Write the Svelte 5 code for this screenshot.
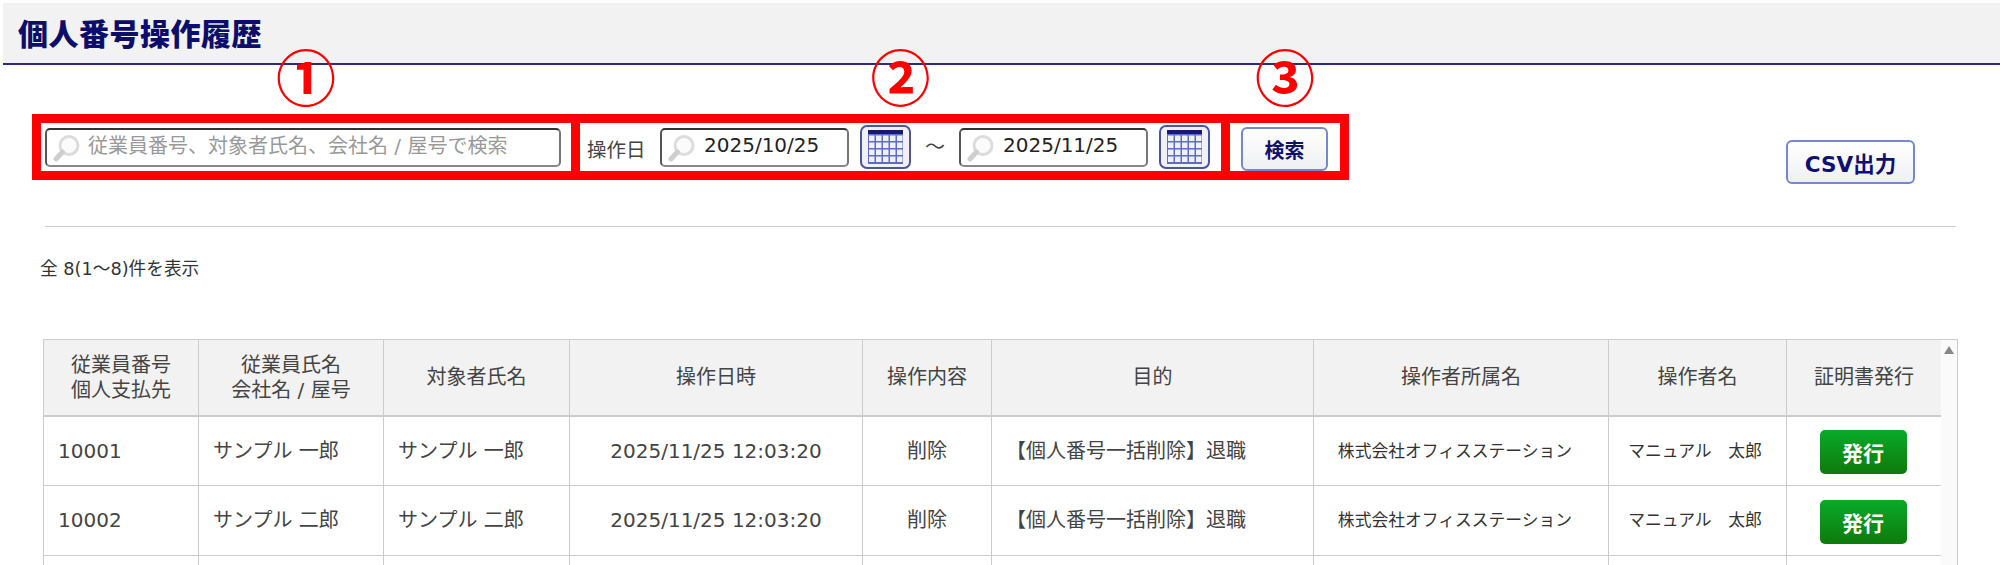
<script>
  const rows = [
    { id: '10001', employee: 'サンプル 一郎', target: 'サンプル 一郎' },
    { id: '10002', employee: 'サンプル 二郎', target: 'サンプル 二郎' }
  ];
  const columns = [0, 1, 2, 3, 4];
  const gridRows = [0, 1, 2, 3];
</script>

{#snippet searchIcon()}
  <svg class="lens" width="28" height="28" viewBox="0 0 28 28" aria-hidden="true">
    <circle cx="16" cy="11.5" r="9" fill="#fbfbfb" stroke="#dcdcdc" stroke-width="3" />
    <path d="M9.5 18 L3 25" stroke="#cfcfcf" stroke-width="5" stroke-linecap="round" />
  </svg>
{/snippet}

{#snippet calendar()}
  <button class="cal" aria-label="カレンダー">
    <svg width="35" height="34" viewBox="0 0 35 34" aria-hidden="true">
      <rect width="35" height="34" fill="#5f6cc4" />
      <rect width="35" height="4" fill="#191970" />
      {#each gridRows as r}
        {#each columns as c}
          <rect x={1 + c * 7} y={5.5 + r * 7} width="5.5" height="5.5" fill="#eef0fb" />
        {/each}
      {/each}
    </svg>
  </button>
{/snippet}

<div class="page">
  <header class="title-bar">
    <h1>個人番号操作履歴</h1>
  </header>

  <div class="controls">
    <div class="red-frame">
      <section class="sec sec-1">
        <span class="mark">①</span>
        <div class="field wide">
          {@render searchIcon()}
          <input placeholder="従業員番号、対象者氏名、会社名 / 屋号で検索" />
        </div>
      </section>
      <section class="sec sec-2">
        <span class="mark">②</span>
        <span class="label">操作日</span>
        <div class="field date">
          {@render searchIcon()}
          <input value="2025/10/25" />
        </div>
        {@render calendar()}
        <span class="tilde">～</span>
        <div class="field date">
          {@render searchIcon()}
          <input value="2025/11/25" />
        </div>
        {@render calendar()}
      </section>
      <section class="sec sec-3">
        <span class="mark">③</span>
        <button class="btn search">検索</button>
      </section>
    </div>
    <button class="btn csv">CSV出力</button>
  </div>

  <hr />

  <p class="count">全 8(1～8)件を表示</p>

  <div class="table-wrap">
    <table>
      <colgroup>
        <col /><col /><col /><col /><col /><col /><col /><col /><col />
      </colgroup>
      <thead>
        <tr>
          <th>従業員番号<br />個人支払先</th>
          <th>従業員氏名<br />会社名 / 屋号</th>
          <th>対象者氏名</th>
          <th>操作日時</th>
          <th>操作内容</th>
          <th>目的</th>
          <th>操作者所属名</th>
          <th>操作者名</th>
          <th>証明書発行</th>
        </tr>
      </thead>
      <tbody>
        {#each rows as row}
          <tr>
            <td class="left">{row.id}</td>
            <td class="left">{row.employee}</td>
            <td class="left">{row.target}</td>
            <td>2025/11/25 12:03:20</td>
            <td>削除</td>
            <td class="left">【個人番号一括削除】退職</td>
            <td class="small org">株式会社オフィスステーション</td>
            <td class="small op">マニュアル　太郎</td>
            <td><button class="issue">発行</button></td>
          </tr>
        {/each}
        <tr class="blank">
          <td></td><td></td><td></td><td></td><td></td><td></td><td></td><td></td><td></td>
        </tr>
      </tbody>
    </table>
    <div class="scroll-track"><span class="arrow"></span></div>
  </div>
</div>

<style>
  :global(body) {
    margin: 0;
    background: #fff;
  }
  .page {
    height: 565px;
    overflow: hidden;
    font-family: "DejaVu Sans", "Noto Sans CJK JP", sans-serif;
    font-size: 20px;
    color: #444;
  }
  .title-bar {
    margin: 3px 0 0 3px;
    height: 60px;
    background: #f2f2f2;
    border-bottom: 2px solid #2b2b85;
    display: flex;
    align-items: center;
    padding-left: 15px;
  }
  h1 {
    margin: 0 0 3px;
    font-size: 30px;
    letter-spacing: 0.5px;
    font-weight: 900;
    color: #0d0d6b;
    font-family: "Noto Sans CJK JP", sans-serif;
  }
  .controls {
    display: flex;
    align-items: flex-start;
    justify-content: space-between;
    margin: 49px 85px 0 32px;
  }
  .red-frame {
    display: flex;
    height: 48px;
    border: 9px solid #f00;
    background: #f00;
    gap: 9px;
  }
  .sec {
    position: relative;
    background: #fff;
    display: flex;
    align-items: center;
    height: 48px;
    box-sizing: border-box;
  }
  .sec-1 { width: 530px; padding-left: 5px; }
  .sec-2 { width: 641px; padding-left: 7px; }
  .sec-3 { width: 110px; padding-left: 11px; }
  .mark {
    position: absolute;
    left: 50%;
    top: -78px;
    transform: translateX(-50%);
    font-family: "Noto Sans CJK JP", sans-serif;
    font-size: 60px;
    line-height: 60px;
    font-weight: 700;
    color: #f00;
  }
  .field {
    position: relative;
    box-sizing: border-box;
    height: 39px;
    border: 2px solid;
    border-color: #333 #777 #888 #555;
    border-radius: 5px;
    background: #fff;
    display: flex;
    align-items: center;
  }
  .wide { width: 516px; margin-top: 1px; margin-left: -1px; }
  .date { width: 189px; margin-top: 1px; }
  .lens {
    flex: none;
    margin-left: 6px;
  }
  input {
    flex: 1;
    min-width: 0;
    border: 0;
    outline: 0;
    padding: 0;
    background: transparent;
    font: inherit;
    color: #222;
  }
  .wide input { margin-left: 7px; margin-top: -4px; }
  .date input { margin-left: 8px; margin-top: -5px; }
  input::placeholder {
    color: #999;
    opacity: 1;
    font-family: "DejaVu Sans", "Noto Sans CJK JP", sans-serif;
  }
  .label {
    width: 73px;
    flex: none;
    font-size: 19.5px;
    margin-top: 2px;
  }
  .cal {
    flex: none;
    box-sizing: border-box;
    width: 51px;
    height: 44px;
    margin-left: 11px;
    padding: 0;
    border: 2px solid #4a55a0;
    border-radius: 7px;
    background: #f0f0f6;
    display: flex;
    align-items: center;
    justify-content: center;
  }
  .tilde {
    width: 48px;
    flex: none;
    text-align: center;
    margin-top: -4px;
  }
  .btn {
    box-sizing: border-box;
    border: 2px solid #7587cf;
    border-radius: 6px;
    background: linear-gradient(#fff, #eff0f3);
    color: #10106e;
    font-family: inherit;
    font-weight: 700;
    padding: 0;
  }
  .search {
    width: 87px;
    height: 44px;
    margin-top: 4px;
    font-size: 20px;
  }
  .csv {
    width: 129px;
    height: 44px;
    margin-top: 26px;
    font-size: 21.5px;
  }
  hr {
    margin: 42px 44px 0 45px;
    border: 0;
    height: 1px;
    background: #ccc;
  }
  .count {
    margin: 32px 0 0 40px;
    font-size: 17.7px;
    line-height: 20px;
    color: #333;
  }
  .table-wrap {
    display: flex;
    margin: 60px 42px 0 43px;
    border: 1px solid #ccc;
    border-bottom: 0;
  }
  table {
    width: 1897px;
    flex: none;
    border-collapse: separate;
    border-spacing: 0;
    table-layout: fixed;
    height: 0;
  }
  col:nth-child(1) { width: 155px; }
  col:nth-child(2) { width: 185px; }
  col:nth-child(3) { width: 186px; }
  col:nth-child(4) { width: 293px; }
  col:nth-child(5) { width: 129px; }
  col:nth-child(6) { width: 322px; }
  col:nth-child(7) { width: 295px; }
  col:nth-child(8) { width: 178px; }
  col:nth-child(9) { width: 154px; }
  th, td {
    box-sizing: border-box;
    border-right: 1px solid #ccc;
    border-bottom: 1px solid #ccc;
    text-align: center;
    font-weight: 400;
    padding: 0;
    line-height: 25px;
  }
  th:last-child, td:last-child { border-right: 0; }
  th {
    height: 77px;
    background: #f2f2f2;
    border-bottom-width: 2px;
    color: #444;
  }
  tbody tr:nth-child(1) td { height: 69px; }
  tbody tr:nth-child(2) td { height: 70px; }
  .blank td { height: 70px; }
  .left {
    text-align: left;
    padding-left: 14px;
  }
  .small {
    font-size: 16.8px;
    color: #333;
  }
  .org { padding-right: 12px; }
  .op { padding-right: 5px; }
  .issue {
    box-sizing: border-box;
    width: 87px;
    height: 44px;
    margin-top: 2px;
    margin-right: 2px;
    vertical-align: middle;
    border: 0;
    border-radius: 5px;
    background: linear-gradient(#09aa2a, #0e7a0c);
    color: #fff;
    font-family: inherit;
    font-weight: 700;
    font-size: 21px;
    padding: 0;
  }
  .scroll-track {
    flex: 1;
    background: #fafafa;
    position: relative;
  }
  .arrow {
    position: absolute;
    left: 3px;
    top: 6px;
    border-left: 5px solid transparent;
    border-right: 5px solid transparent;
    border-bottom: 8px solid #888;
  }
</style>
